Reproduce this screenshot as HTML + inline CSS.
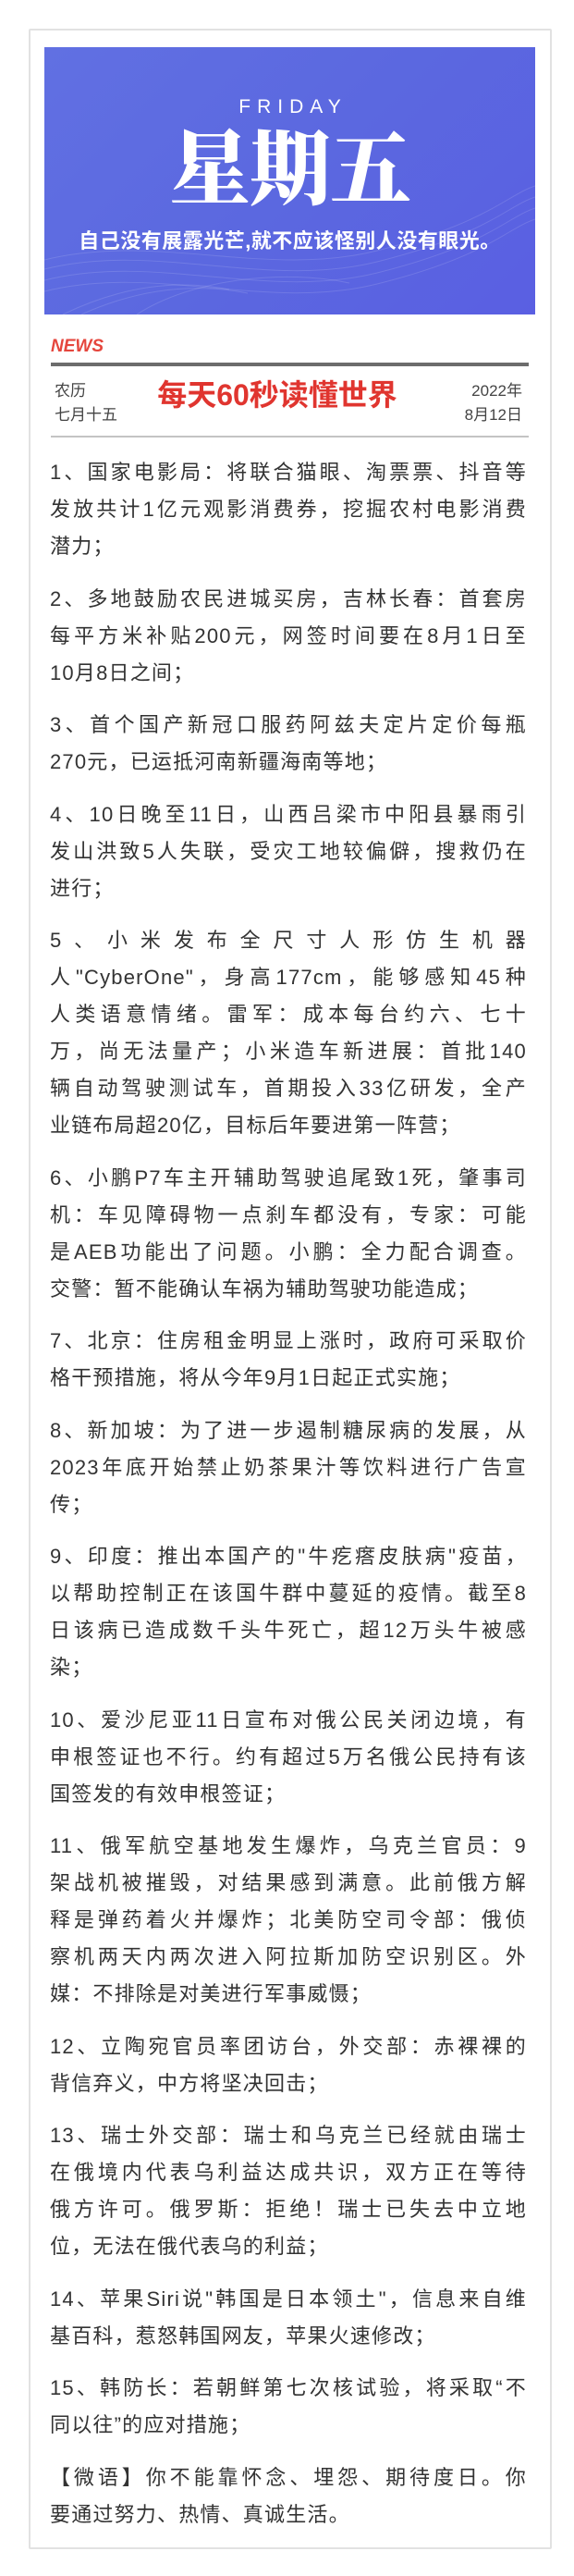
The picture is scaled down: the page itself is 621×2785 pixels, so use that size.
<!DOCTYPE html>
<html><head><meta charset="utf-8">
<style>
*{margin:0;padding:0;box-sizing:border-box}
html,body{width:621px;height:2785px;background:#fff;overflow:hidden}
body{font-family:"Liberation Sans","Noto Sans CJK SC",sans-serif;color:#333;position:relative}
.card{position:absolute;left:31px;top:31px;width:566px;height:2725px;border:2px solid #e2e2e2;border-radius:2px}
.banner{position:absolute;left:48px;top:51px;width:531px;height:289px;background:linear-gradient(135deg,#6170e2 0%,#5b68e0 50%,#5a5fe2 100%);overflow:hidden}
.fri{position:absolute;left:0;width:100%;top:52px;text-align:center;color:#fff;font-size:21px;letter-spacing:7px;line-height:26px;font-weight:normal;padding-left:7px}
.big{position:absolute;left:0;width:100%;top:76px;text-align:center;color:#fff;font-size:88px;font-weight:900;line-height:100px;font-family:"Noto Serif CJK SC","Noto Sans CJK SC",serif;letter-spacing:-1px}
.sub{position:absolute;left:0;width:100%;top:196px;text-align:center;color:#fff;font-size:22px;font-weight:bold;line-height:28px;letter-spacing:0.5px}
.news{position:absolute;left:55px;top:362px;color:#e5463d;font-size:19px;font-weight:bold;font-style:italic;line-height:26px}
.bar{position:absolute;left:55px;top:392px;width:517px;height:4px;background:#6c6c6c}
.lunar{position:absolute;left:59px;top:410px;font-size:17px;line-height:26px;color:#444}
.title{position:absolute;left:150px;width:300px;top:408px;text-align:center;font-size:32px;font-weight:bold;color:#e0352f;line-height:38px}
.date{position:absolute;right:56px;top:410px;font-size:17px;line-height:26px;color:#444;text-align:right}
.rule{position:absolute;left:55px;top:471px;width:517px;height:2px;background:#c4c4c4}
.content{position:absolute;left:54px;top:491px;width:516px;font-size:22px;line-height:40px;letter-spacing:1.2px;color:#333}
.content p{margin-bottom:16.5px}
.content span{display:block;text-align:justify;text-align-last:justify;white-space:nowrap}
.content span.l{text-align:left;text-align-last:left}
</style></head><body>
<div class="card"></div>
<div class="banner">
<svg width="531" height="289" style="position:absolute;left:0;top:0" fill="none" stroke="rgba(255,255,255,0.13)" stroke-width="1">
<path d="M0 230 C120 200 240 250 360 220 S500 160 531 150"/>
<path d="M0 240 C120 210 240 262 360 232 S500 172 531 162"/>
<path d="M0 252 C120 222 240 274 360 244 S500 184 531 174"/>
<path d="M0 264 C120 234 240 286 360 256 S500 196 531 186"/>
<path d="M20 289 C80 260 140 250 200 262"/>
<path d="M40 289 C100 262 160 254 220 266"/>
<path d="M100 289 C160 250 260 240 330 255"/>
</svg>
<div class="fri">FRIDAY</div>
<div class="big">星期五</div>
<div class="sub">自己没有展露光芒,就不应该怪别人没有眼光。</div>
</div>
<div class="news">NEWS</div>
<div class="bar"></div>
<div class="lunar">农历<br>七月十五</div>
<div class="title">每天60秒读懂世界</div>
<div class="date">2022年<br>8月12日</div>
<div class="rule"></div>
<div class="content">
<p><span>1、国家电影局：将联合猫眼、淘票票、抖音等</span><span>发放共计1亿元观影消费券，挖掘农村电影消费</span><span class="l">潜力；</span></p>
<p><span>2、多地鼓励农民进城买房，吉林长春：首套房</span><span>每平方米补贴200元，网签时间要在8月1日至</span><span class="l">10月8日之间；</span></p>
<p><span>3、首个国产新冠口服药阿兹夫定片定价每瓶</span><span class="l">270元，已运抵河南新疆海南等地；</span></p>
<p><span>4、10日晚至11日，山西吕梁市中阳县暴雨引</span><span>发山洪致5人失联，受灾工地较偏僻，搜救仍在</span><span class="l">进行；</span></p>
<p><span>5、小米发布全尺寸人形仿生机器</span><span>人"CyberOne"，身高177cm，能够感知45种</span><span>人类语意情绪。雷军：成本每台约六、七十</span><span>万，尚无法量产；小米造车新进展：首批140</span><span>辆自动驾驶测试车，首期投入33亿研发，全产</span><span class="l">业链布局超20亿，目标后年要进第一阵营；</span></p>
<p><span>6、小鹏P7车主开辅助驾驶追尾致1死，肇事司</span><span>机：车见障碍物一点刹车都没有，专家：可能</span><span>是AEB功能出了问题。小鹏：全力配合调查。</span><span class="l">交警：暂不能确认车祸为辅助驾驶功能造成；</span></p>
<p><span>7、北京：住房租金明显上涨时，政府可采取价</span><span class="l">格干预措施，将从今年9月1日起正式实施；</span></p>
<p><span>8、新加坡：为了进一步遏制糖尿病的发展，从</span><span>2023年底开始禁止奶茶果汁等饮料进行广告宣</span><span class="l">传；</span></p>
<p><span>9、印度：推出本国产的"牛疙瘩皮肤病"疫苗，</span><span>以帮助控制正在该国牛群中蔓延的疫情。截至8</span><span>日该病已造成数千头牛死亡，超12万头牛被感</span><span class="l">染；</span></p>
<p><span>10、爱沙尼亚11日宣布对俄公民关闭边境，有</span><span>申根签证也不行。约有超过5万名俄公民持有该</span><span class="l">国签发的有效申根签证；</span></p>
<p><span>11、俄军航空基地发生爆炸，乌克兰官员：9</span><span>架战机被摧毁，对结果感到满意。此前俄方解</span><span>释是弹药着火并爆炸；北美防空司令部：俄侦</span><span>察机两天内两次进入阿拉斯加防空识别区。外</span><span class="l">媒：不排除是对美进行军事威慑；</span></p>
<p><span>12、立陶宛官员率团访台，外交部：赤裸裸的</span><span class="l">背信弃义，中方将坚决回击；</span></p>
<p><span>13、瑞士外交部：瑞士和乌克兰已经就由瑞士</span><span>在俄境内代表乌利益达成共识，双方正在等待</span><span>俄方许可。俄罗斯：拒绝！瑞士已失去中立地</span><span class="l">位，无法在俄代表乌的利益；</span></p>
<p><span>14、苹果Siri说"韩国是日本领土"，信息来自维</span><span class="l">基百科，惹怒韩国网友，苹果火速修改；</span></p>
<p><span>15、韩防长：若朝鲜第七次核试验，将采取“不</span><span class="l">同以往”的应对措施；</span></p>
<p><span>【微语】你不能靠怀念、埋怨、期待度日。你</span><span class="l">要通过努力、热情、真诚生活。</span></p>
</div>
</body></html>
